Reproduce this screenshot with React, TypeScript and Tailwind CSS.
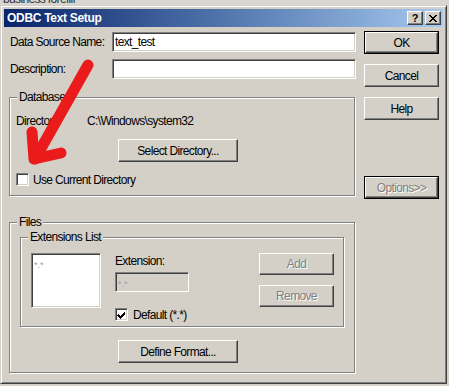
import React from "react";

const sunken =
  "border border-t-[#808080] border-l-[#808080] border-r-white border-b-white shadow-[inset_1px_1px_0_#404040,inset_-1px_-1px_0_#d4d0c8]";
const raised =
  "border border-t-white border-l-white border-r-[#404040] border-b-[#404040] shadow-[inset_-1px_-1px_0_#808080]";
const etched = "border border-[#808080] shadow-[1px_1px_0_#fff,inset_1px_1px_0_#fff]";
const greyText = "text-[#808080] [text-shadow:1px_1px_0_#fff]";

function Button({
  label,
  className = "",
  isDefault = false,
  disabled = false,
}: {
  label: string;
  className?: string;
  isDefault?: boolean;
  disabled?: boolean;
}) {
  const face = (
    <div className={`${raised} flex h-full w-full items-center justify-center bg-[#d4d0c8]`}>
      <span className={disabled ? greyText : "text-black"}>{label}</span>
    </div>
  );
  if (isDefault) {
    return <div className={`border border-black ${className}`}>{face}</div>;
  }
  return <div className={className}>{face}</div>;
}

function Group({ title, className = "", children }: { title: string; className?: string; children: React.ReactNode }) {
  return (
    <div className={`relative ${etched} ${className}`}>
      <span className="absolute -top-[8px] left-[7px] bg-[#d4d0c8] px-[2px] leading-[14px]">{title}</span>
      {children}
    </div>
  );
}

function CheckBox({ checked = false }: { checked?: boolean }) {
  return (
    <div className={`${sunken} h-[13px] w-[13px] shrink-0 bg-white`}>
      {checked && (
        <svg width="11" height="11" viewBox="0 0 11 11" shapeRendering="crispEdges">
          <path d="M2 5h1v1h1v1h1v-1h1v-1h1v-1h1v-1h1v3h-1v1h-1v1h-1v1h-1v1h-1v-1h-1v-1h-1v-1h-1z" fill="#000" />
        </svg>
      )}
    </div>
  );
}

export default function App() {
  return (
    <div className="relative h-[386px] w-[449px] overflow-hidden whitespace-nowrap bg-[#d4d0c8] font-['Liberation_Sans',Arial,sans-serif] text-[12px] tracking-[-0.65px] text-black">
      <div className="h-[5px] overflow-hidden bg-[#d8d6d0]">
        <div className="-mt-[8px] pl-[3px] leading-[14px] text-[#303030]">business forefill</div>
      </div>

      <div className="flex h-[379px] w-[447px] flex-col border border-t-[#d4d0c8] border-l-[#d4d0c8] border-r-[#404040] border-b-[#404040] p-[3px] shadow-[inset_1px_1px_0_#fff,inset_-1px_-1px_0_#808080]">
        <div className="flex h-[18px] items-center bg-gradient-to-r from-[#0a246a] to-[#a6caf0] pl-[3px] pr-[2px]">
          <span className="flex-1 text-[12px] font-bold tracking-[-0.3px] text-white">ODBC Text Setup</span>
          <div className={`${raised} flex h-[14px] w-[16px] items-center justify-center bg-[#d4d0c8] text-[11px] leading-none font-bold tracking-normal`}>
            ?
          </div>
          <div className={`${raised} ml-[2px] flex h-[14px] w-[16px] items-center justify-center bg-[#d4d0c8]`}>
            <svg width="8" height="7" viewBox="0 0 8 7" shapeRendering="crispEdges">
              <path d="M0 0h2v1h1v1h2v-1h1v-1h2v1h-1v1h-1v1h-1v1h1v1h1v1h1v1h-2v-1h-1v-1h-2v1h-1v1h-2v-1h1v-1h1v-1h1v-1h-1v-1h-1v-1h-1z" fill="#000" />
            </svg>
          </div>
        </div>

        <div className="flex flex-1">
          <div className="ml-[5px] w-[347px]">
            <div className="mt-[5px] flex h-[20px] items-center">
              <span className="w-[103px] pl-[1px]">Data Source Name:</span>
              <div className={`${sunken} flex h-full w-[244px] items-center bg-white pl-[2px]`}>text_test</div>
            </div>
            <div className="mt-[7px] flex h-[20px] items-center">
              <span className="w-[103px] pl-[1px]">Description:</span>
              <div className={`${sunken} h-full w-[244px] bg-white`} />
            </div>

            <Group title="Database" className="mt-[18px] h-[99px] w-[346px] pl-[6px] pt-[16px]">
              <div className="flex leading-[14px]">
                <span className="w-[71px]">Directory:</span>
                <span>C:\Windows\system32</span>
              </div>
              <Button label="Select Directory..." className="ml-[102px] mt-[11px] h-[23px] w-[120px]" />
              <div className="mt-[11px] flex h-[13px] items-center gap-[4px]">
                <CheckBox />
                <span>Use Current Directory</span>
              </div>
            </Group>

            <Group title="Files" className="mt-[26px] h-[151px] w-[346px] pl-[10px] pt-[14px]">
              <Group title="Extensions List" className="flex h-[90px] w-[324px] pl-[10px] pt-[15px]">
                <div className={`${sunken} h-[55px] w-[70px] bg-white pl-[2px] pt-[1px]`}>
                  <span className="text-[9px] leading-none tracking-normal text-[#a0a0a0]">*.*</span>
                </div>
                <div className="ml-[14px] flex w-[144px] flex-col">
                  <span className="mt-[1px] leading-[14px]">Extension:</span>
                  <div className={`${sunken} mt-[4px] h-[20px] w-[74px] bg-[#d4d0c8] pl-[2px] pt-[1px]`}>
                    <span className="text-[9px] leading-none tracking-normal text-[#a0a0a0]">*.*</span>
                  </div>
                  <div className="mt-[16px] flex h-[13px] items-center gap-[5px]">
                    <CheckBox checked />
                    <span>Default (*.*)</span>
                  </div>
                </div>
                <div className="flex flex-col gap-[10px]">
                  <Button label="Add" disabled className="h-[22px] w-[75px]" />
                  <Button label="Remove" disabled className="h-[22px] w-[75px]" />
                </div>
              </Group>
              <Button label="Define Format..." className="ml-[98px] mt-[13px] h-[23px] w-[120px]" />
            </Group>
          </div>

          <div className="ml-[8px] flex w-[75px] flex-col">
            <Button label="OK" isDefault className="mt-[4px] h-[23px] w-[75px]" />
            <Button label="Cancel" className="mt-[10px] h-[23px] w-[75px]" />
            <Button label="Help" className="mt-[10px] h-[23px] w-[75px]" />
            <Button label="Options>>" isDefault disabled className="mt-[56px] h-[23px] w-[75px]" />
          </div>
        </div>
      </div>

      <svg className="pointer-events-none absolute inset-0" width="449" height="386" viewBox="0 0 449 386">
        <g stroke="#ec1b1b" strokeWidth="11" strokeLinecap="round" strokeLinejoin="round" fill="none">
          <path d="M88 65 L35 159" />
          <path d="M32 132 L34 159 L61 153" />
        </g>
      </svg>
    </div>
  );
}
